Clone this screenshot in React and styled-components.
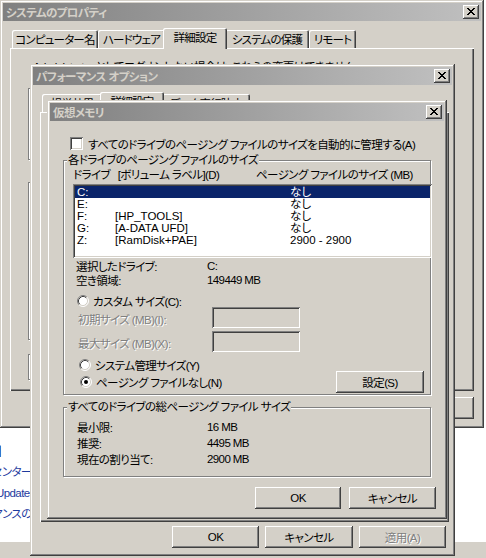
import React from "react";
import styled, { createGlobalStyle, css } from "styled-components";

const FACE = "#d4d0c8";
const SHADOW = "#808080";
const DARK = "#404040";
const HILITE = "#ffffff";
const SELECT = "#0a246a";

const raised = css`
  box-shadow: inset -1px -1px ${DARK}, inset 1px 1px ${HILITE},
    inset -2px -2px ${SHADOW}, inset 2px 2px ${FACE};
`;
const frameEdge = css`
  box-shadow: inset -1px -1px ${DARK}, inset 1px 1px ${FACE},
    inset -2px -2px ${SHADOW}, inset 2px 2px ${HILITE};
`;
const sunken = css`
  box-shadow: inset 1px 1px ${SHADOW}, inset -1px -1px ${HILITE},
    inset 2px 2px ${DARK}, inset -2px -2px ${FACE};
`;

const GlobalStyle = createGlobalStyle`
  html, body { margin: 0; padding: 0; }
  body {
    width: 486px;
    height: 558px;
    overflow: hidden;
    font-family: "Liberation Sans", "Noto Sans CJK JP", sans-serif;
    font-size: 11.5px;
    letter-spacing: -0.6px;
    font-feature-settings: "palt";
    color: #000;
  }
`;

/* ---------- desktop & the explorer window behind the dialogs ---------- */

const Desktop = styled.div`
  position: relative;
  width: 486px;
  height: 558px;
  overflow: hidden;
  display: flex;
  flex-direction: column;
  background: #fff;
`;

const BackPane = styled.div`
  flex: 1;
  background: #fff;
  padding-top: 444px;
`;

const RelatedLinks = styled.nav`
  display: flex;
  flex-direction: column;
  white-space: nowrap;
`;

const RelatedHeading = styled.div`
  height: 18px;
  margin-left: ${(p) => p.$indent}px;
  line-height: 16px;
  font-weight: bold;
  font-size: 12px;
`;

const RelatedLink = styled.div`
  margin-left: ${(p) => p.$indent}px;
  line-height: 21px;
  color: #1e3a9e;
`;

const BackStatus = styled.div`
  height: 16px;
  background: ${FACE};
  border-top: 1px solid ${HILITE};
`;

/* ---------- classic window chrome ---------- */

const Win = styled.section`
  position: absolute;
  z-index: ${(p) => p.$z};
  left: ${(p) => p.$x}px;
  top: ${(p) => p.$y}px;
  width: ${(p) => p.$w}px;
  height: ${(p) => p.$h}px;
  box-sizing: border-box;
  padding: 3px;
  background: ${FACE};
  ${frameEdge};
  display: flex;
  flex-direction: column;
`;

const TitleBar = styled.header`
  flex: none;
  height: 18px;
  display: flex;
  align-items: center;
  justify-content: space-between;
  padding: 0 2px 0 3px;
  background: linear-gradient(90deg, #808080, #c0c0c0);
  color: ${FACE};
  font-weight: bold;
  white-space: nowrap;
`;

const CloseBox = styled.span`
  width: 16px;
  height: 14px;
  box-sizing: border-box;
  padding-top: 3px;
  display: flex;
  justify-content: center;
  background: ${FACE};
  ${raised};
`;

const CloseGlyph = () => (
  <svg width="8" height="7" viewBox="0 0 8 7" shapeRendering="crispEdges">
    <path
      fill="#000"
      d="M0 0h2v1H0zM6 0h2v1H6zM1 1h2v1H1zM5 1h2v1H5zM2 2h4v1H2zM3 3h2v1H3zM2 4h4v1H2zM1 5h2v1H1zM5 5h2v1H5zM0 6h2v1H0zM6 6h2v1H6z"
    />
  </svg>
);

const Title = ({ children }) => (
  <TitleBar>
    <span>{children}</span>
    <CloseBox>
      <CloseGlyph />
    </CloseBox>
  </TitleBar>
);

/* ---------- property sheet parts ---------- */

const Sheet = styled.div`
  display: flex;
  flex-direction: column;
  padding: ${(p) => p.$pt}px ${(p) => p.$pr}px 0 ${(p) => p.$pl}px;
`;

const TabStrip = styled.div`
  display: flex;
  align-items: flex-end;
  height: 20px;
  padding-left: 2px;
`;

const Tab = styled.div`
  position: relative;
  z-index: ${(p) => (p.$active ? 2 : 1)};
  flex: none;
  box-sizing: border-box;
  width: ${(p) => p.$w + (p.$active ? 4 : 0)}px;
  height: ${(p) => (p.$active ? 21 : 18)}px;
  margin: 0 ${(p) => (p.$active ? -2 : 0)}px ${(p) => (p.$active ? -1 : 0)}px;
  padding-bottom: ${(p) => (p.$active ? 3 : 0)}px;
  border-radius: 2px 2px 0 0;
  background: ${FACE};
  box-shadow: inset 1px 1px ${HILITE}, inset -1px 0 ${DARK},
    inset -2px 0 ${SHADOW};
  display: flex;
  align-items: center;
  justify-content: center;
  letter-spacing: -0.8px;
  white-space: nowrap;
`;

const TabPanel = styled.div`
  box-sizing: border-box;
  height: ${(p) => p.$h}px;
  background: ${FACE};
  box-shadow: inset 1px 1px ${HILITE}, inset -1px -1px ${DARK},
    inset -2px -2px ${SHADOW};
  display: flex;
  flex-direction: column;
  padding: ${(p) => p.$pad};
  overflow: hidden;
`;

const ButtonRow = styled.div`
  display: flex;
  justify-content: flex-end;
  gap: ${(p) => p.$gap}px;
  margin-top: ${(p) => p.$mt}px;
  padding-right: ${(p) => p.$pr}px;
`;

const PushButton = styled.button`
  flex: none;
  width: ${(p) => p.$w}px;
  height: ${(p) => p.$h || 22}px;
  margin: 0;
  padding: 0;
  border: 0;
  font: inherit;
  letter-spacing: inherit;
  font-feature-settings: "palt";
  background: ${FACE};
  ${raised};
  color: ${(p) => (p.disabled ? SHADOW : "#000")};
  text-shadow: ${(p) => (p.disabled ? `1px 1px ${HILITE}` : "none")};
  display: flex;
  align-items: center;
  justify-content: center;
  white-space: nowrap;
`;

/* ---------- group boxes ---------- */

const Group = styled.div`
  position: relative;
  box-sizing: border-box;
  flex: none;
  width: ${(p) => p.$w}px;
  height: ${(p) => (p.$h ? `${p.$h}px` : "auto")};
  margin-top: ${(p) => p.$mt}px;
  padding: ${(p) => p.$pad};
  border: 1px solid ${SHADOW};
  box-shadow: inset 1px 1px ${HILITE}, 1px 1px ${HILITE};
  display: flex;
  flex-direction: column;
`;

const Legend = styled.span`
  position: absolute;
  left: 3px;
  top: -8px;
  padding: 0 1px;
  line-height: 15px;
  background: ${FACE};
  white-space: nowrap;
`;

/* ---------- form controls ---------- */

const CheckRow = styled.label`
  display: flex;
  align-items: center;
  gap: 5px;
  height: 13px;
  padding-left: 7px;
  white-space: nowrap;
`;

const CheckBox = styled.span`
  flex: none;
  width: 13px;
  height: 13px;
  background: #fff;
  ${sunken};
`;

const RadioRow = styled.div`
  display: flex;
  align-items: center;
  gap: 4px;
  height: ${(p) => p.$h || 12}px;
  margin-top: ${(p) => p.$mt || 0}px;
  padding-left: ${(p) => p.$indent}px;
  white-space: nowrap;
`;

const RadioDot = ({ on }) => (
  <svg width="12" height="12" viewBox="0 0 12 12" style={{ flex: "none" }}>
    <circle cx="6" cy="6" r="5" fill="#fff" />
    <path d="M2.11 9.89A5.5 5.5 0 0 1 9.89 2.11" fill="none" stroke={SHADOW} />
    <path d="M2.82 9.18A4.5 4.5 0 0 1 9.18 2.82" fill="none" stroke={DARK} />
    <path d="M9.89 2.11A5.5 5.5 0 0 1 2.11 9.89" fill="none" stroke={HILITE} />
    <path d="M9.18 2.82A4.5 4.5 0 0 1 2.82 9.18" fill="none" stroke={FACE} />
    {on && <circle cx="6" cy="6" r="2" fill="#000" />}
  </svg>
);

const SizeRow = styled.div`
  display: grid;
  grid-template-columns: 134px 88px;
  align-items: center;
  height: 21px;
  margin-top: ${(p) => p.$mt || 0}px;
  padding-left: 5px;
  white-space: nowrap;
`;

const DimLabel = styled.span`
  padding-top: 3px;
  color: ${SHADOW};
  text-shadow: 1px 1px ${HILITE};
`;

const DisabledField = styled.span`
  height: 21px;
  background: ${FACE};
  ${sunken};
`;

const ListHeader = styled.div`
  display: grid;
  grid-template-columns: 183px 1fr;
  height: 15px;
  line-height: 15px;
  white-space: pre;
`;

const ListBox = styled.div`
  box-sizing: border-box;
  width: 359px;
  height: 74px;
  margin-top: 1px;
  padding: 2px;
  background: #fff;
  letter-spacing: 0;
  ${sunken};
`;

const DriveRow = styled.div`
  display: grid;
  grid-template-columns: 38px 175px 1fr;
  height: 12px;
  line-height: 12px;
  padding-left: 2px;
  white-space: nowrap;
  background: ${(p) => (p.$selected ? SELECT : "transparent")};
  color: ${(p) => (p.$selected ? "#fff" : "#000")};
`;

const InfoGrid = styled.div`
  display: grid;
  grid-template-columns: ${(p) => p.$col}px 1fr;
  grid-auto-rows: ${(p) => p.$row}px;
  align-items: center;
  margin-top: ${(p) => p.$mt || 0}px;
  padding-left: ${(p) => p.$pl}px;
  white-space: nowrap;
`;

const LastRow = styled.div`
  display: flex;
  align-items: center;
  justify-content: space-between;
  height: 22px;
  padding-right: 6px;
`;

const VmBody = styled.div`
  display: flex;
  flex-direction: column;
  padding: 16px 8px 0 13px;
`;

const AdminNote = styled.div`
  margin-left: 5px;
  line-height: 14px;
  white-space: nowrap;
`;

const GroupText = styled.div`
  white-space: nowrap;
  line-height: 14px;
`;

const GroupFoot = styled.div`
  margin-top: auto;
  display: flex;
  justify-content: flex-end;
`;

/* ---------- data ---------- */

const drives = [
  { letter: "C:", label: "", size: "なし", selected: true },
  { letter: "E:", label: "", size: "なし" },
  { letter: "F:", label: "[HP_TOOLS]", size: "なし" },
  { letter: "G:", label: "[A-DATA UFD]", size: "なし" },
  { letter: "Z:", label: "[RamDisk+PAE]", size: "2900 - 2900" },
];

/* ---------- windows ---------- */

function SystemProperties() {
  return (
    <Win $z={1} $x={0} $y={0} $w={484} $h={428}>
      <Title>システムのプロパティ</Title>
      <Sheet $pt={7} $pl={7} $pr={7}>
        <TabStrip>
          <Tab $w={86}>コンピューター名</Tab>
          <Tab $w={67}>ハードウェア</Tab>
          <Tab $w={60} $active>
            詳細設定
          </Tab>
          <Tab $w={84}>システムの保護</Tab>
          <Tab $w={47}>リモート</Tab>
        </TabStrip>
        <TabPanel $h={343} $pad="12px 8px 8px 18px">
          <AdminNote>
            Administrator としてログオンしない場合は、これらの変更はできません。
          </AdminNote>
          <Group $w={420} $h={72} $mt={14} $pad="14px 8px 8px 10px">
            <Legend>パフォーマンス</Legend>
            <GroupText>視覚効果、プロセッサのスケジュール、メモリ使用、および仮想メモリ</GroupText>
            <GroupFoot>
              <PushButton $w={87}>設定(S)...</PushButton>
            </GroupFoot>
          </Group>
          <Group $w={420} $h={158} $mt={22} $pad="14px 8px 8px 10px">
            <Legend>ユーザー プロファイル</Legend>
            <GroupText>ログオンに関連したデスクトップ設定</GroupText>
            <GroupFoot>
              <PushButton $w={87}>設定(E)...</PushButton>
            </GroupFoot>
          </Group>
          <Group $w={420} $h={26} $mt={14} $pad="6px 8px 0 10px">
            <Legend>起動と回復</Legend>
          </Group>
        </TabPanel>
      </Sheet>
      <ButtonRow $gap={6} $mt={6} $pr={7}>
        <PushButton $w={87}>OK</PushButton>
        <PushButton $w={87}>キャンセル</PushButton>
        <PushButton $w={87}>適用(A)</PushButton>
      </ButtonRow>
    </Win>
  );
}

function PerformanceOptions() {
  return (
    <Win $z={2} $x={30} $y={64} $w={425} $h={492}>
      <Title>パフォーマンス オプション</Title>
      <Sheet $pt={7} $pl={7} $pr={3}>
        <TabStrip>
          <Tab $w={60}>視覚効果</Tab>
          <Tab $w={60} $active>
            詳細設定
          </Tab>
          <Tab $w={88}>データ実行防止</Tab>
        </TabStrip>
        <TabPanel $h={410} $pad="0" />
      </Sheet>
      <ButtonRow $gap={6} $mt={4} $pr={6}>
        <PushButton $w={87}>OK</PushButton>
        <PushButton $w={88}>キャンセル</PushButton>
        <PushButton $w={87} disabled>
          適用(A)
        </PushButton>
      </ButtonRow>
    </Win>
  );
}

function VirtualMemory() {
  return (
    <Win $z={3} $x={47} $y={100} $w={400} $h={419}>
      <Title>仮想メモリ</Title>
      <VmBody>
        <CheckRow>
          <CheckBox />
          <span>すべてのドライブのページング ファイルのサイズを自動的に管理する(A)</span>
        </CheckRow>

        <Group $w={368} $mt={10} $pad="7px 0 1px 9px">
          <Legend>各ドライブのページング ファイルのサイズ</Legend>
          <ListHeader>
            <span>ドライブ   [ボリューム ラベル](D)</span>
            <span>ページング ファイルのサイズ (MB)</span>
          </ListHeader>
          <ListBox>
            {drives.map((d) => (
              <DriveRow key={d.letter} $selected={d.selected}>
                <span>{d.letter}</span>
                <span>{d.label}</span>
                <span>{d.size}</span>
              </DriveRow>
            ))}
          </ListBox>
          <InfoGrid $col={131} $row={14} $mt={1} $pl={3}>
            <span>選択したドライブ:</span>
            <span>C:</span>
            <span>空き領域:</span>
            <span>149449 MB</span>
          </InfoGrid>
          <RadioRow $mt={8} $indent={4}>
            <RadioDot />
            <span>カスタム サイズ(C):</span>
          </RadioRow>
          <SizeRow>
            <DimLabel>初期サイズ (MB)(I):</DimLabel>
            <DisabledField />
          </SizeRow>
          <SizeRow $mt={3}>
            <DimLabel>最大サイズ (MB)(X):</DimLabel>
            <DisabledField />
          </SizeRow>
          <RadioRow $mt={7} $indent={6}>
            <RadioDot />
            <span>システム管理サイズ(Y)</span>
          </RadioRow>
          <LastRow>
            <RadioRow $indent={7}>
              <RadioDot on />
              <span>ページング ファイルなし(N)</span>
            </RadioRow>
            <PushButton $w={88}>設定(S)</PushButton>
          </LastRow>
        </Group>

        <Group $w={368} $mt={12} $pad="11px 0 9px 13px">
          <Legend>すべてのドライブの総ページング ファイル サイズ</Legend>
          <InfoGrid $col={130} $row={16} $pl={0}>
            <span>最小限:</span>
            <span>16 MB</span>
            <span>推奨:</span>
            <span>4495 MB</span>
            <span>現在の割り当て:</span>
            <span>2900 MB</span>
          </InfoGrid>
        </Group>

        <ButtonRow $gap={8} $mt={10} $pr={0}>
          <PushButton $w={86}>OK</PushButton>
          <PushButton $w={87}>キャンセル</PushButton>
        </ButtonRow>
      </VmBody>
    </Win>
  );
}

export default function App() {
  return (
    <>
      <GlobalStyle />
      <Desktop>
        <BackPane>
          <RelatedLinks>
            <RelatedHeading $indent={-44}>関連項目</RelatedHeading>
            <RelatedLink $indent={-58}>アクション センター</RelatedLink>
            <RelatedLink $indent={-49}>Windows Update</RelatedLink>
            <RelatedLink $indent={-46}>パフォーマンスの情報とツール</RelatedLink>
          </RelatedLinks>
        </BackPane>
        <BackStatus />
        <SystemProperties />
        <PerformanceOptions />
        <VirtualMemory />
      </Desktop>
    </>
  );
}
